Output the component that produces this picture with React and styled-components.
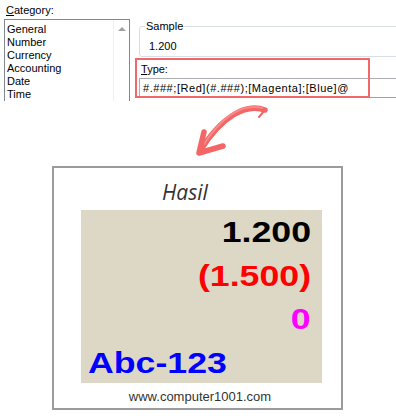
import React from "react";
import styled, { createGlobalStyle } from "styled-components";

const Global = createGlobalStyle`
  html, body {
    margin: 0;
    padding: 0;
    background: #fff;
  }
  body {
    font-family: "Liberation Sans", Arial, sans-serif;
  }
`;

const Page = styled.div`
  width: 396px;
  height: 418px;
  overflow: hidden;
  background: #fff;
`;

const Dialog = styled.div`
  display: flex;
  height: 101px;
  overflow: hidden;
  font-size: 11px;
  color: #000;
`;

const CategoryCol = styled.div`
  width: 126px;
  padding-left: 4px;
  flex-shrink: 0;
`;

const Label = styled.div`
  line-height: 13px;
  padding: ${(p) => p.$pad || "4px 0 2px 2px"};
  u {
    text-decoration: underline;
    text-underline-offset: 1px;
  }
`;

const ListBox = styled.div`
  display: flex;
  height: 90px;
  border: 1px solid #828790;
  border-bottom: none;
  box-sizing: border-box;
`;

const Items = styled.ul`
  flex: 1;
  list-style: none;
  margin: 0;
  padding: 3px 0 0 2px;
  li {
    line-height: 13px;
  }
`;

const ScrollBar = styled.div`
  width: 16px;
  border-left: 1px solid #f0f0f0;
  display: flex;
  justify-content: center;
  padding-top: 7px;
  box-sizing: border-box;
`;

const ScrollUp = styled.div`
  width: 0;
  height: 0;
  border-left: 4px solid transparent;
  border-right: 4px solid transparent;
  border-bottom: 4px solid #a0a0a0;
`;

const RightCol = styled.div`
  flex: 1;
  padding: 20px 0 0 5px;
  min-width: 0;
`;

const SampleGroup = styled.fieldset`
  margin: 0 0 0 4px;
  padding: 0 5px 3px;
  width: 300px;
  border: 1px solid #d5dfe5;
  border-radius: 3px;
  legend {
    padding: 0 1px;
    line-height: 13px;
  }
`;

const SampleValue = styled.div`
  line-height: 13px;
  margin-top: 7px;
  padding-left: 4px;
`;

const TypeArea = styled.div`
  position: relative;
  width: 235px;
  height: 40px;
  margin-top: 1px;
  padding-left: 4px;
  box-sizing: border-box;
`;

const Highlight = styled.div`
  position: absolute;
  inset: 0;
  border: 2px solid #f26868;
  pointer-events: none;
`;

const TypeInput = styled.div`
  width: 300px;
  height: 20px;
  border: 1px solid #abadb3;
  border-bottom-color: #a0a0a0;
  box-sizing: border-box;
  padding: 0 3px;
  line-height: 18px;
  letter-spacing: 0.55px;
  white-space: nowrap;
`;

const ArrowWrap = styled.div`
  height: 65px;
  svg {
    display: block;
  }
`;

const Card = styled.div`
  margin-left: 52px;
  width: 291px;
  height: 244px;
  border: 2px solid #9b9b9b;
  box-sizing: border-box;
  display: flex;
  flex-direction: column;
`;

const Title = styled.div`
  margin-top: 11px;
  line-height: 26px;
  text-align: center;
  padding-right: 25px;
  font-family: "Open Sans", sans-serif;
  font-style: italic;
  font-size: 21px;
  color: #333;
`;

const Cells = styled.div`
  margin: 5px 0 0 27px;
  width: 241px;
  height: 173px;
  background: #ddd8c5;
  font-family: "Liberation Sans", Arial, sans-serif;
  font-weight: bold;
  font-size: 30px;
`;

const Cell = styled.div`
  line-height: 44px;
  height: 43.5px;
  text-align: ${(p) => p.$align};
  color: ${(p) => p.$color};
  padding: 0 11px 0 7px;
`;

const Wide = styled.span`
  display: inline-block;
  transform: scaleX(1.19);
  transform-origin: ${(p) => p.$align} center;
`;

const Url = styled.div`
  margin-top: 6px;
  line-height: 16px;
  text-align: center;
  padding-left: 5px;
  font-size: 13px;
  color: #333;
`;

const categories = ["General", "Number", "Currency", "Accounting", "Date", "Time"];

const cells = [
  { text: "1.200", color: "#000", align: "right" },
  { text: "(1.500)", color: "#ff0000", align: "right" },
  { text: "0", color: "#ff00ff", align: "right" },
  { text: "Abc-123", color: "#0000ff", align: "left" },
];

const App = () => {
  return (
    <Page>
      <Global />
      <Dialog>
        <CategoryCol>
          <Label>
            <u>C</u>ategory:
          </Label>
          <ListBox>
            <Items>
              {categories.map((c) => (
                <li key={c}>{c}</li>
              ))}
            </Items>
            <ScrollBar>
              <ScrollUp />
            </ScrollBar>
          </ListBox>
        </CategoryCol>
        <RightCol>
          <SampleGroup>
            <legend>Sample</legend>
            <SampleValue>1.200</SampleValue>
          </SampleGroup>
          <TypeArea>
            <Label $pad="5px 0 2px 2px">
              <u>T</u>ype:
            </Label>
            <TypeInput>#.###;[Red](#.###);[Magenta];[Blue]@</TypeInput>
            <Highlight />
          </TypeArea>
        </RightCol>
      </Dialog>

      <ArrowWrap>
        <svg width="396" height="65" viewBox="0 101 396 65">
          <g fill="none" stroke="#f46666" strokeLinecap="round" strokeLinejoin="round">
            <path d="M 265 110 C 246 103, 222 116, 200 151" strokeWidth="5.5" />
            <path d="M 262 108 C 244 104, 224 114, 204 144" strokeWidth="2" stroke="#f78a8a" />
            <path d="M 204 132 L 199 153 L 223 146" strokeWidth="5.5" />
            <path d="M 264 111 L 259 117" strokeWidth="2" />
          </g>
        </svg>
      </ArrowWrap>

      <Card>
        <Title>Hasil</Title>
        <Cells>
          {cells.map((c) => (
            <Cell key={c.text} $color={c.color} $align={c.align}>
              <Wide $align={c.align}>{c.text}</Wide>
            </Cell>
          ))}
        </Cells>
        <Url>www.computer1001.com</Url>
      </Card>
    </Page>
  );
};

export default App;
